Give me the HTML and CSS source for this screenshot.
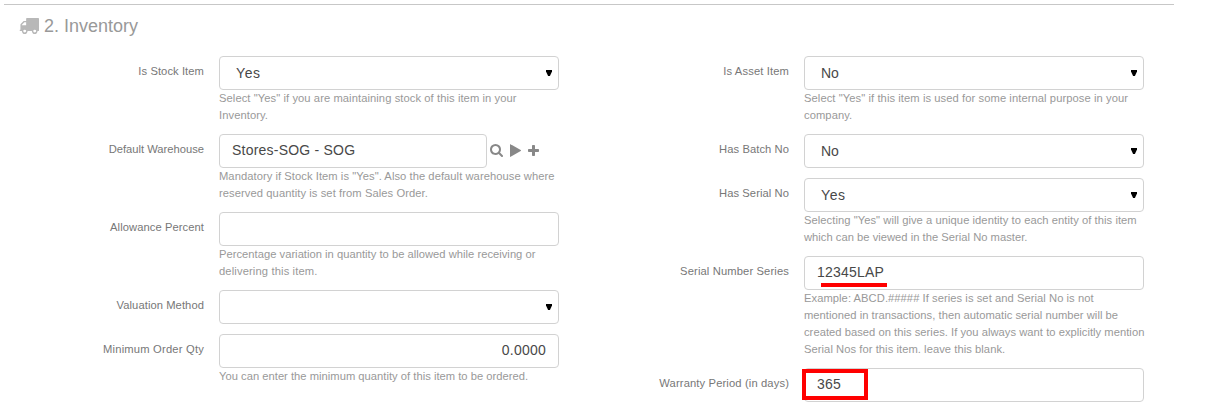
FILE: index.html
```
<!DOCTYPE html>
<html lang="en">
<head>
<meta charset="utf-8">
<title>Inventory</title>
<link rel="stylesheet" href="styles.css">
</head>
<body>
<section class="section">
  <h4 class="heading">
    <svg class="truck" viewBox="0 256 1792 1408" preserveAspectRatio="none"><path d="M640 1408q0-52-38-90t-90-38-90 38-38 90 38 90 90 38 90-38 38-90zm-384-512h384v-256h-158q-13 0-22 9l-195 195q-9 9-9 22v30zm1280 512q0-52-38-90t-90-38-90 38-38 90 38 90 90 38 90-38 38-90zm256-1088v1024q0 15-4 26.500t-13.500 18.500-16.500 11.500-23.500 6-22.500 2-25.500 0-22.500-.5q0 106-75 181t-181 75-181-75-75-181h-384q0 106-75 181t-181 75-181-75-75-181h-64q-3 0-22.500.5t-25.500 0-22.500-2-23.500-6-16.500-11.500-13.500-18.500-4-26.500q0-26 19-45t45-19v-320q0-8-.5-35t0-38 2.500-34.500 6.500-37 14-30.500 22.500-30l198-198q19-19 50.500-32t58.500-13h160v-192q0-26 19-45t45-19h1024q26 0 45 19t19 45z"/></svg>
    <span>2. Inventory</span>
  </h4>
  <div class="columns">
    <div class="column">
      <div class="row">
        <div class="label track-4">Is Stock Item</div>
        <div class="field">
          <div class="control select"><span class="track-wide">Yes</span><svg class="arrow" viewBox="0 0 6 6"><path d="M0 0h6v1.500L3.900 6H2.100L0 1.500z"/></svg></div>
          <p class="help track-4">Select "Yes" if you are maintaining stock of this item in your<br>Inventory.</p>
        </div>
      </div>
      <div class="row">
        <div class="label">Default Warehouse</div>
        <div class="field">
          <div class="link-line">
            <div class="control link">Stores-SOG - SOG</div>
            <svg class="search" viewBox="64 128 1664 1664"><path d="M1216 832q0-185-131.500-316.500t-316.500-131.500-316.500 131.500-131.500 316.500 131.500 316.500 316.500 131.500 316.500-131.500 131.500-316.500zm512 832q0 52-38 90t-90 38q-54 0-90-38l-343-342q-179 124-399 124-143 0-273.500-55.500t-225-150-150-225-55.500-273.500 55.500-273.500 150-225 225-150 273.500-55.500 273.500 55.500 225 150 150 225 55.500 273.500q0 220-124 399l343 343q37 37 37 90z"/></svg>
            <svg class="play" viewBox="0 0 11 13"><path d="M0 .6Q0-.1.6.2L10.700 6.100q.6.4 0 .8L.6 12.800Q0 13.100 0 12.400z"/></svg>
            <svg class="plus" viewBox="0 0 11 11"><path d="M4.800 0h1.400q.8 0 .8.8V4h3.200q.8 0 .8.800v1.400q0 .8-.8.8H7v3.200q0 .8-.8.8H4.800q-.8 0-.8-.8V7H.8Q0 7 0 6.200V4.800Q0 4 .8 4H4V.8Q4 0 4.800 0z"/></svg>
          </div>
          <p class="help"><span class="track-3">Mandatory if Stock Item is "Yes". Also the default warehouse where</span><br><span class="track-4">reserved quantity is set from Sales Order.</span></p>
        </div>
      </div>
      <div class="row">
        <div class="label track-4">Allowance Percent</div>
        <div class="field">
          <div class="control"></div>
          <p class="help"><span class="track-1">Percentage variation in quantity to be allowed while receiving or</span><br><span class="track-5">delivering this item.</span></p>
        </div>
      </div>
      <div class="row">
        <div class="label track-4">Valuation Method</div>
        <div class="field">
          <div class="control select"><span></span><svg class="arrow" viewBox="0 0 6 6"><path d="M0 0h6v1.500L3.900 6H2.100L0 1.500z"/></svg></div>
        </div>
      </div>
      <div class="row">
        <div class="label track-6">Minimum Order Qty</div>
        <div class="field">
          <div class="control number">0.0000</div>
          <p class="help track-1">You can enter the minimum quantity of this item to be ordered.</p>
        </div>
      </div>
    </div>
    <div class="column">
      <div class="row">
        <div class="label track-5">Is Asset Item</div>
        <div class="field">
          <div class="control select"><span>No</span><svg class="arrow" viewBox="0 0 6 6"><path d="M0 0h6v1.500L3.900 6H2.100L0 1.500z"/></svg></div>
          <p class="help track-4">Select "Yes" if this item is used for some internal purpose in your<br>company.</p>
        </div>
      </div>
      <div class="row">
        <div class="label track-4">Has Batch No</div>
        <div class="field">
          <div class="control select"><span>No</span><svg class="arrow" viewBox="0 0 6 6"><path d="M0 0h6v1.500L3.900 6H2.100L0 1.500z"/></svg></div>
        </div>
      </div>
      <div class="row">
        <div class="label track-4">Has Serial No</div>
        <div class="field">
          <div class="control select"><span class="track-wide">Yes</span><svg class="arrow" viewBox="0 0 6 6"><path d="M0 0h6v1.500L3.900 6H2.100L0 1.500z"/></svg></div>
          <p class="help"><span class="track-3">Selecting "Yes" will give a unique identity to each entity of this item</span><br><span class="track-1">which can be viewed in the Serial No master.</span></p>
        </div>
      </div>
      <div class="row">
        <div class="label track-5">Serial Number Series</div>
        <div class="field">
          <div class="control">12345LAP<span class="mark-line"></span></div>
          <p class="help"><span class="track-3">Example: ABCD.##### If series is set and Serial No is not</span><br><span class="track-2">mentioned in transactions, then automatic serial number will be<br>created based on this series. If you always want to explicitly mention</span><br><span class="track-3">Serial Nos for this item. leave this blank.</span></p>
        </div>
      </div>
      <div class="row">
        <div class="label track-5">Warranty Period (in days)</div>
        <div class="field">
          <div class="control">365<span class="mark-box"></span></div>
        </div>
      </div>
    </div>
  </div>
</section>
</body>
</html>
```
FILE: styles.css
```
* { box-sizing: border-box; }
body {
  margin: 0;
  height: 404px;
  overflow: hidden;
  background: #fff;
  font-family: "Liberation Sans", Arial, sans-serif;
}
.section {
  width: 1170px;
  margin: 4px 0 0 4px;
  border-top: 1px solid #c7c7c7;
  padding: 11px 0 0 15px;
}
.heading {
  display: flex;
  align-items: center;
  gap: 5px;
  height: 20px;
  margin: 0 0 20px;
  font-size: 18px;
  font-weight: 400;
  line-height: 20px;
  color: #999;
}
.truck { width: 20px; height: 16px; margin-bottom: 1px; fill: #b8b8b8; }
.columns { display: flex; gap: 45px; }
.column {
  display: flex;
  flex-direction: column;
  gap: 10px;
  width: 540px;
}
.row { display: flex; gap: 15px; }
.label {
  width: 185px;
  padding-top: 7px;
  font-size: 11.2px;
  line-height: 17px;
  text-align: right;
  white-space: nowrap;
  color: #777;
}
.field { width: 340px; }
.control {
  position: relative;
  display: flex;
  align-items: center;
  height: 34px;
  padding: 0 12px 2px;
  border: 1px solid #d2d2d2;
  border-radius: 4px;
  font-size: 14px;
  letter-spacing: .22px;
  color: #484848;
}
.select { justify-content: space-between; padding: 0 6px 0 16px; letter-spacing: 0; }
.arrow { width: 6px; height: 6px; fill: #000; }
.number { justify-content: flex-end; }
.link-line { display: flex; align-items: center; fill: #888; }
.link { width: 268px; }
.search { width: 13px; height: 13px; margin: 0 0 2px 3px; }
.play { width: 11px; height: 13px; margin: 0 0 2px 7px; }
.plus { width: 11px; height: 11px; margin: 0 0 2px 7px; }
.help {
  margin: 0;
  font-size: 11.2px;
  line-height: 17px;
  white-space: nowrap;
  color: #999;
}
.track-1 { letter-spacing: .018px; }
.track-2 { letter-spacing: .03px; }
.track-3 { letter-spacing: .052px; }
.track-4 { letter-spacing: .075px; }
.track-5 { letter-spacing: .13px; }
.track-6 { letter-spacing: .2px; }
.track-wide { letter-spacing: .6px; }
.mark-line {
  position: absolute;
  left: 16px;
  top: 26px;
  width: 66px;
  height: 4px;
  background: #f00;
}
.mark-box {
  position: absolute;
  left: -3px;
  top: 0;
  width: 66px;
  height: 31px;
  border: 4px solid #f00;
}
```
